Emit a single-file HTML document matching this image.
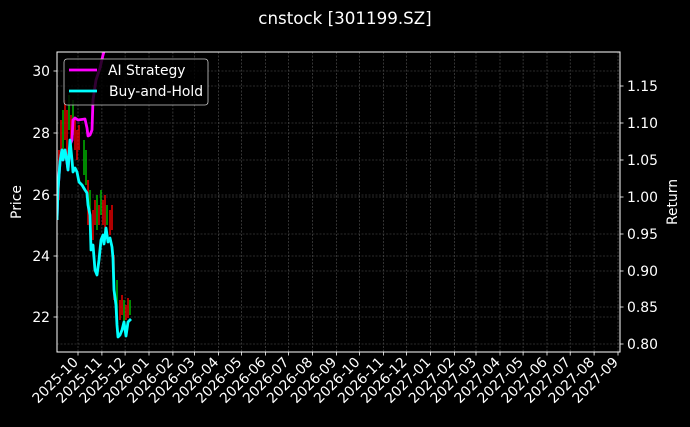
<!DOCTYPE html>
<html><head><meta charset="utf-8"><style>
html,body{margin:0;padding:0;background:#000;}
svg text{font-family:"DejaVu Sans","Liberation Sans",sans-serif;fill:#fff;}
</style></head><body>
<svg width="690" height="422" viewBox="0 0 690 422" xmlns="http://www.w3.org/2000/svg">
<rect width="690" height="422" fill="#000"/>
<text x="345" y="24" font-size="16.7" text-anchor="middle">cnstock [301199.SZ]</text>
<g stroke="#555" stroke-width="0.6" stroke-dasharray="2,1.5">
<line x1="57" x2="620" y1="71" y2="71"/><line x1="57" x2="620" y1="133" y2="133"/><line x1="57" x2="620" y1="195" y2="195"/><line x1="57" x2="620" y1="256" y2="256"/><line x1="57" x2="620" y1="317" y2="317"/>
<line x1="57" x2="620" y1="86" y2="86"/><line x1="57" x2="620" y1="123" y2="123"/><line x1="57" x2="620" y1="160" y2="160"/><line x1="57" x2="620" y1="197" y2="197"/><line x1="57" x2="620" y1="234" y2="234"/><line x1="57" x2="620" y1="271" y2="271"/><line x1="57" x2="620" y1="307" y2="307"/><line x1="57" x2="620" y1="344" y2="344"/>
<line x1="78" x2="78" y1="52" y2="352"/><line x1="101.9" x2="101.9" y1="52" y2="352"/><line x1="125.1" x2="125.1" y1="52" y2="352"/><line x1="149" x2="149" y1="52" y2="352"/><line x1="172.9" x2="172.9" y1="52" y2="352"/><line x1="194.5" x2="194.5" y1="52" y2="352"/><line x1="218.4" x2="218.4" y1="52" y2="352"/><line x1="241.5" x2="241.5" y1="52" y2="352"/><line x1="265.5" x2="265.5" y1="52" y2="352"/><line x1="288.6" x2="288.6" y1="52" y2="352"/><line x1="312.5" x2="312.5" y1="52" y2="352"/><line x1="336.4" x2="336.4" y1="52" y2="352"/><line x1="359.6" x2="359.6" y1="52" y2="352"/><line x1="383.5" x2="383.5" y1="52" y2="352"/><line x1="406.6" x2="406.6" y1="52" y2="352"/><line x1="430.5" x2="430.5" y1="52" y2="352"/><line x1="454.4" x2="454.4" y1="52" y2="352"/><line x1="476" x2="476" y1="52" y2="352"/><line x1="500" x2="500" y1="52" y2="352"/><line x1="523.1" x2="523.1" y1="52" y2="352"/><line x1="547" x2="547" y1="52" y2="352"/><line x1="570.2" x2="570.2" y1="52" y2="352"/><line x1="594.1" x2="594.1" y1="52" y2="352"/><line x1="618" x2="618" y1="52" y2="352"/>
</g>
<defs><clipPath id="c"><rect x="57" y="52" width="563" height="300"/></clipPath></defs>
<g clip-path="url(#c)">
<g stroke-width="1.6">
<line x1="59" x2="59" y1="150" y2="200" stroke="#d00"/><line x1="61" x2="61" y1="120" y2="160" stroke="#d00"/><line x1="63" x2="63" y1="110" y2="150" stroke="#0a0"/><line x1="65" x2="65" y1="100" y2="140" stroke="#d00"/><line x1="67" x2="67" y1="110" y2="155" stroke="#d00"/><line x1="69" x2="69" y1="95" y2="130" stroke="#0a0"/><line x1="71" x2="71" y1="115" y2="150" stroke="#d00"/><line x1="73" x2="73" y1="100" y2="135" stroke="#0a0"/><line x1="75" x2="75" y1="120" y2="150" stroke="#d00"/><line x1="77" x2="77" y1="130" y2="160" stroke="#d00"/><line x1="79" x2="79" y1="125" y2="150" stroke="#d00"/><line x1="84" x2="84" y1="140" y2="175" stroke="#0a0"/><line x1="86" x2="86" y1="150" y2="185" stroke="#0a0"/><line x1="88" x2="88" y1="180" y2="225" stroke="#d00"/><line x1="90" x2="90" y1="190" y2="230" stroke="#0a0"/><line x1="93" x2="93" y1="210" y2="240" stroke="#d00"/><line x1="95" x2="95" y1="200" y2="225" stroke="#d00"/><line x1="97" x2="97" y1="195" y2="230" stroke="#0a0"/><line x1="99" x2="99" y1="205" y2="225" stroke="#d00"/><line x1="101" x2="101" y1="190" y2="215" stroke="#0a0"/><line x1="103" x2="103" y1="200" y2="225" stroke="#d00"/><line x1="105" x2="105" y1="195" y2="230" stroke="#d00"/><line x1="107" x2="107" y1="205" y2="225" stroke="#0a0"/><line x1="110" x2="110" y1="210" y2="235" stroke="#d00"/><line x1="112" x2="112" y1="205" y2="230" stroke="#d00"/><line x1="114" x2="114" y1="255" y2="300" stroke="#d00"/><line x1="117" x2="117" y1="280" y2="330" stroke="#0a0"/><line x1="120" x2="120" y1="300" y2="320" stroke="#d00"/><line x1="122" x2="122" y1="295" y2="315" stroke="#d00"/><line x1="124" x2="124" y1="300" y2="325" stroke="#0a0"/><line x1="126" x2="126" y1="305" y2="320" stroke="#d00"/><line x1="128" x2="128" y1="298" y2="318" stroke="#d00"/><line x1="130" x2="130" y1="300" y2="315" stroke="#0a0"/>
</g>
<polyline fill="none" stroke="#ff00ff" stroke-width="2.8" stroke-linejoin="round" points="57,220 58,190 60,162 62,150 63,160 65,150 67,162 68,170 70,145 72,140 73,120 75,118 78,120 85,119 87,128 88,136 90,135 92,130 93,100 96,80 100,68 103,55 106,45"/>
<polyline fill="none" stroke="#00ffff" stroke-width="2.8" stroke-linejoin="round" points="57,220 58,190 60,162 62,150 63,160 65,150 67,162 68,170 70,140 72,160 73,172 75,168 77,172 79,182 82,185 85,190 87,193 88,205 90,215 91,250 93,245 95,270 97,275 99,260 101,240 103,235 104,244 106,228 108,242 110,238 112,247 113,258 114,290 116,305 117,325 118,337 120,335 122,330 124,322 126,336 128,322 131,319"/>
</g>
<rect x="57" y="52" width="563" height="300" fill="none" stroke="#fff" stroke-width="1"/>
<g stroke="#fff" stroke-width="0.8">
<line x1="53.5" x2="57" y1="71" y2="71"/><line x1="53.5" x2="57" y1="133" y2="133"/><line x1="53.5" x2="57" y1="195" y2="195"/><line x1="53.5" x2="57" y1="256" y2="256"/><line x1="53.5" x2="57" y1="317" y2="317"/>
<line x1="620" x2="623.5" y1="86" y2="86"/><line x1="620" x2="623.5" y1="123" y2="123"/><line x1="620" x2="623.5" y1="160" y2="160"/><line x1="620" x2="623.5" y1="197" y2="197"/><line x1="620" x2="623.5" y1="234" y2="234"/><line x1="620" x2="623.5" y1="271" y2="271"/><line x1="620" x2="623.5" y1="307" y2="307"/><line x1="620" x2="623.5" y1="344" y2="344"/>
<line x1="78" x2="78" y1="352" y2="355.5"/><line x1="101.9" x2="101.9" y1="352" y2="355.5"/><line x1="125.1" x2="125.1" y1="352" y2="355.5"/><line x1="149" x2="149" y1="352" y2="355.5"/><line x1="172.9" x2="172.9" y1="352" y2="355.5"/><line x1="194.5" x2="194.5" y1="352" y2="355.5"/><line x1="218.4" x2="218.4" y1="352" y2="355.5"/><line x1="241.5" x2="241.5" y1="352" y2="355.5"/><line x1="265.5" x2="265.5" y1="352" y2="355.5"/><line x1="288.6" x2="288.6" y1="352" y2="355.5"/><line x1="312.5" x2="312.5" y1="352" y2="355.5"/><line x1="336.4" x2="336.4" y1="352" y2="355.5"/><line x1="359.6" x2="359.6" y1="352" y2="355.5"/><line x1="383.5" x2="383.5" y1="352" y2="355.5"/><line x1="406.6" x2="406.6" y1="352" y2="355.5"/><line x1="430.5" x2="430.5" y1="352" y2="355.5"/><line x1="454.4" x2="454.4" y1="352" y2="355.5"/><line x1="476" x2="476" y1="352" y2="355.5"/><line x1="500" x2="500" y1="352" y2="355.5"/><line x1="523.1" x2="523.1" y1="352" y2="355.5"/><line x1="547" x2="547" y1="352" y2="355.5"/><line x1="570.2" x2="570.2" y1="352" y2="355.5"/><line x1="594.1" x2="594.1" y1="352" y2="355.5"/><line x1="618" x2="618" y1="352" y2="355.5"/>
</g>
<g font-size="13.9" text-anchor="end">
<text x="50" y="76">30</text><text x="50" y="138">28</text><text x="50" y="200">26</text><text x="50" y="261">24</text><text x="50" y="322">22</text>
</g>
<g font-size="13.9">
<text x="627" y="91">1.15</text><text x="627" y="128">1.10</text><text x="627" y="165">1.05</text><text x="627" y="202">1.00</text><text x="627" y="239">0.95</text><text x="627" y="276">0.90</text><text x="627" y="312">0.85</text><text x="627" y="349">0.80</text>
</g>
<text font-size="13.9" transform="translate(21,202) rotate(-90)" text-anchor="middle">Price</text>
<text font-size="13.9" transform="translate(677,202) rotate(-90)" text-anchor="middle">Return</text>
<g font-size="13.9" text-anchor="end">
<text transform="translate(79,363) rotate(-45)">2025-10</text>
<text transform="translate(102.9,363) rotate(-45)">2025-11</text>
<text transform="translate(126.1,363) rotate(-45)">2025-12</text>
<text transform="translate(150,363) rotate(-45)">2026-01</text>
<text transform="translate(173.9,363) rotate(-45)">2026-02</text>
<text transform="translate(195.5,363) rotate(-45)">2026-03</text>
<text transform="translate(219.4,363) rotate(-45)">2026-04</text>
<text transform="translate(242.5,363) rotate(-45)">2026-05</text>
<text transform="translate(266.5,363) rotate(-45)">2026-06</text>
<text transform="translate(289.6,363) rotate(-45)">2026-07</text>
<text transform="translate(313.5,363) rotate(-45)">2026-08</text>
<text transform="translate(337.4,363) rotate(-45)">2026-09</text>
<text transform="translate(360.6,363) rotate(-45)">2026-10</text>
<text transform="translate(384.5,363) rotate(-45)">2026-11</text>
<text transform="translate(407.6,363) rotate(-45)">2026-12</text>
<text transform="translate(431.5,363) rotate(-45)">2027-01</text>
<text transform="translate(455.4,363) rotate(-45)">2027-02</text>
<text transform="translate(477,363) rotate(-45)">2027-03</text>
<text transform="translate(501,363) rotate(-45)">2027-04</text>
<text transform="translate(524.1,363) rotate(-45)">2027-05</text>
<text transform="translate(548,363) rotate(-45)">2027-06</text>
<text transform="translate(571.2,363) rotate(-45)">2027-07</text>
<text transform="translate(595.1,363) rotate(-45)">2027-08</text>
<text transform="translate(619,363) rotate(-45)">2027-09</text>
</g>
<rect x="64" y="59" width="144" height="46" rx="3" fill="#000" fill-opacity="0.8" stroke="#ccc" stroke-width="0.8"/>
<line x1="69" x2="97" y1="70" y2="70" stroke="#ff00ff" stroke-width="2.8"/>
<line x1="69" x2="97" y1="91" y2="91" stroke="#00ffff" stroke-width="2.8"/>
<text x="108" y="75" font-size="13.9">AI Strategy</text>
<text x="109" y="96" font-size="13.9">Buy-and-Hold</text>
</svg>
</body></html>
